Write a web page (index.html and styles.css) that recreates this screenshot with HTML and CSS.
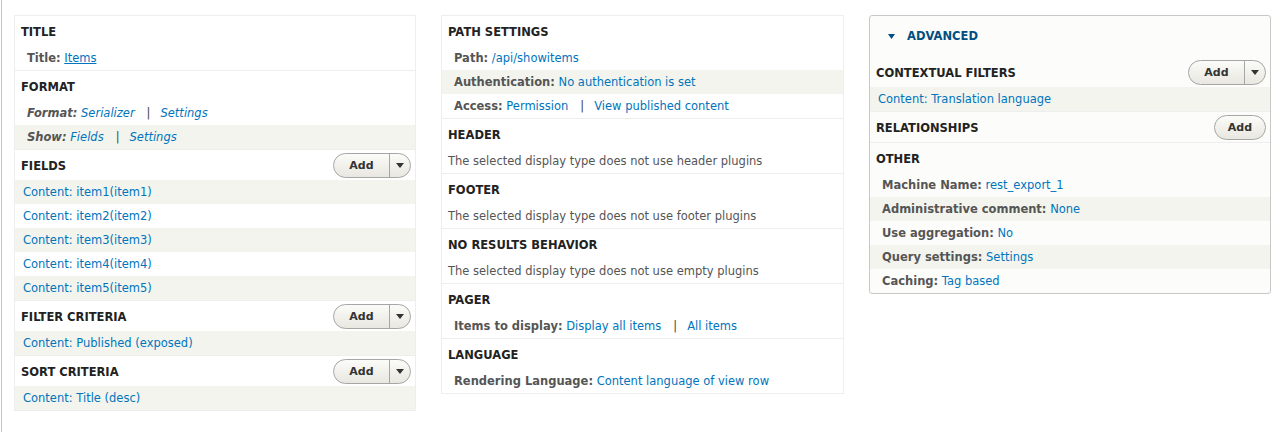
FILE: index.html
```html
<!DOCTYPE html>
<html lang="en">
<head>
<meta charset="utf-8">
<title>Views display settings</title>
<link rel="stylesheet" href="styles.css">
</head>
<body>
<div class="page">
  <div class="columns">

    <!-- First column -->
    <div class="column">
      <section class="bucket">
        <div class="bucket-head"><h3 class="bucket-title">Title</h3></div>
        <div class="row setting"><span class="label">Title:</span> <a href="#" class="underlined">Items</a></div>
      </section>
      <section class="bucket">
        <div class="bucket-head"><h3 class="bucket-title">Format</h3></div>
        <div class="row setting italic"><span class="label">Format:</span> <a href="#">Serializer</a><span class="sep">|</span><a href="#">Settings</a></div>
        <div class="row setting italic alt"><span class="label">Show:</span> <a href="#">Fields</a><span class="sep">|</span><a href="#">Settings</a></div>
      </section>
      <section class="bucket">
        <div class="bucket-head">
          <h3 class="bucket-title">Fields</h3>
          <div class="dropbutton"><span class="action">Add</span><span class="toggle"><svg width="8" height="5" viewBox="0 0 8 5"><path d="M0 0H8L4 5Z" fill="#333"/></svg></span></div>
        </div>
        <div class="row field alt"><a href="#">Content: item1(item1)</a></div>
        <div class="row field"><a href="#">Content: item2(item2)</a></div>
        <div class="row field alt"><a href="#">Content: item3(item3)</a></div>
        <div class="row field"><a href="#">Content: item4(item4)</a></div>
        <div class="row field alt"><a href="#">Content: item5(item5)</a></div>
      </section>
      <section class="bucket">
        <div class="bucket-head">
          <h3 class="bucket-title">Filter criteria</h3>
          <div class="dropbutton"><span class="action">Add</span><span class="toggle"><svg width="8" height="5" viewBox="0 0 8 5"><path d="M0 0H8L4 5Z" fill="#333"/></svg></span></div>
        </div>
        <div class="row field alt"><a href="#">Content: Published (exposed)</a></div>
      </section>
      <section class="bucket">
        <div class="bucket-head">
          <h3 class="bucket-title">Sort criteria</h3>
          <div class="dropbutton"><span class="action">Add</span><span class="toggle"><svg width="8" height="5" viewBox="0 0 8 5"><path d="M0 0H8L4 5Z" fill="#333"/></svg></span></div>
        </div>
        <div class="row field alt"><a href="#">Content: Title (desc)</a></div>
      </section>
    </div>

    <!-- Second column -->
    <div class="column">
      <section class="bucket">
        <div class="bucket-head"><h3 class="bucket-title">Path settings</h3></div>
        <div class="row setting"><span class="label">Path:</span> <a href="#">/api/showitems</a></div>
        <div class="row setting alt"><span class="label">Authentication:</span> <a href="#">No authentication is set</a></div>
        <div class="row setting"><span class="label">Access:</span> <a href="#">Permission</a><span class="sep">|</span><a href="#">View published content</a></div>
      </section>
      <section class="bucket">
        <div class="bucket-head"><h3 class="bucket-title">Header</h3></div>
        <div class="row note">The selected display type does not use header plugins</div>
      </section>
      <section class="bucket">
        <div class="bucket-head"><h3 class="bucket-title">Footer</h3></div>
        <div class="row note">The selected display type does not use footer plugins</div>
      </section>
      <section class="bucket">
        <div class="bucket-head"><h3 class="bucket-title">No results behavior</h3></div>
        <div class="row note">The selected display type does not use empty plugins</div>
      </section>
      <section class="bucket">
        <div class="bucket-head"><h3 class="bucket-title">Pager</h3></div>
        <div class="row setting"><span class="label">Items to display:</span> <a href="#">Display all items</a><span class="sep">|</span><a href="#">All items</a></div>
      </section>
      <section class="bucket">
        <div class="bucket-head"><h3 class="bucket-title">Language</h3></div>
        <div class="row setting"><span class="label">Rendering Language:</span> <a href="#">Content language of view row</a></div>
      </section>
    </div>

    <!-- Third column: advanced settings -->
    <div class="column advanced">
      <div class="legend">
        <svg class="legend-arrow" width="7" height="5" viewBox="0 0 7 5"><path d="M0 0H7L3.5 5Z" fill="#004f80"/></svg>
        <span class="legend-text">Advanced</span>
      </div>
      <section class="bucket">
        <div class="bucket-head">
          <h3 class="bucket-title">Contextual filters</h3>
          <div class="dropbutton"><span class="action">Add</span><span class="toggle"><svg width="8" height="5" viewBox="0 0 8 5"><path d="M0 0H8L4 5Z" fill="#333"/></svg></span></div>
        </div>
        <div class="row field alt"><a href="#">Content: Translation language</a></div>
      </section>
      <section class="bucket">
        <div class="bucket-head">
          <h3 class="bucket-title">Relationships</h3>
          <div class="button-add">Add</div>
        </div>
      </section>
      <section class="bucket">
        <div class="bucket-head"><h3 class="bucket-title">Other</h3></div>
        <div class="row setting"><span class="label">Machine Name:</span> <a href="#">rest_export_1</a></div>
        <div class="row setting alt"><span class="label">Administrative comment:</span> <a href="#">None</a></div>
        <div class="row setting"><span class="label">Use aggregation:</span> <a href="#">No</a></div>
        <div class="row setting alt"><span class="label">Query settings:</span> <a href="#">Settings</a></div>
        <div class="row setting"><span class="label">Caching:</span> <a href="#">Tag based</a></div>
      </section>
    </div>

  </div>
</div>
</body>
</html>
```

FILE: styles.css
```css
html, body {
  margin: 0;
  background: #fff;
}

body {
  font-family: "DejaVu Sans", "Lucida Grande", "Lucida Sans Unicode", sans-serif;
  font-size: 11.5px;
  color: #333;
}

.page {
  margin-left: 1px;
  border-left: 1px solid #c4c4c4;
  min-height: 432px;
  box-sizing: border-box;
  padding: 15px 0 0 12px;
}

.columns {
  display: grid;
  grid-template-columns: 402px 403px 402px;
  column-gap: 25px;
  align-items: start;
}

.column {
  border: 1px solid #eee;
  background: #fff;
}

.column.advanced {
  border-color: #c8c8c8;
  border-radius: 3px;
  background: #fcfcfa;
}

.bucket {
  border-bottom: 1px solid #eee;
}

.bucket:last-child {
  border-bottom: 0;
}

.bucket-head {
  display: flex;
  align-items: center;
  justify-content: space-between;
  height: 30px;
  box-sizing: border-box;
  padding: 1px 4px 0 6px;
}

.bucket-title {
  margin: 0;
  font-size: 11.5px;
  font-weight: bold;
  text-transform: uppercase;
  color: #222;
  line-height: 28px;
  padding-top: 1px;
}

.row {
  height: 24px;
  box-sizing: border-box;
  padding-top: 1px;
  line-height: 23px;
  white-space: nowrap;
}

.row.alt {
  background: #f3f4ee;
}

.setting {
  padding-left: 12px;
}

.field {
  padding-left: 8px;
}

.note {
  padding-left: 6px;
  color: #555;
}

.italic {
  font-style: italic;
}

.label {
  font-weight: bold;
  color: #555;
}

a {
  color: #0074bd;
  text-decoration: none;
}

a.underlined {
  text-decoration: underline;
}

.sep {
  margin: 0 10px 0 12px;
  color: #444;
  font-style: normal;
}

/* Split "Add" button with a toggle arrow */
.dropbutton {
  display: flex;
  height: 25px;
  box-sizing: border-box;
  border: 1px solid #a6a6a6;
  border-radius: 13px;
  background: linear-gradient(#fbfbf8, #e8e7e0);
  overflow: hidden;
}

.dropbutton .action {
  width: 55px;
  display: flex;
  align-items: center;
  justify-content: center;
  font-weight: bold;
  font-size: 11px;
  color: #333;
}

.dropbutton .toggle {
  width: 20px;
  border-left: 1px solid #a6a6a6;
  display: flex;
  align-items: center;
  justify-content: center;
}

.button-add {
  width: 52px;
  height: 25px;
  box-sizing: border-box;
  border: 1px solid #a6a6a6;
  border-radius: 13px;
  background: linear-gradient(#fbfbf8, #e8e7e0);
  display: flex;
  align-items: center;
  justify-content: center;
  font-weight: bold;
  font-size: 11px;
  color: #333;
}

/* Collapsible "Advanced" legend */
.legend {
  height: 41px;
  box-sizing: border-box;
  padding: 12px 0 0 18px;
  display: flex;
  align-items: flex-start;
}

.legend-arrow {
  margin-top: 6px;
  margin-right: 12px;
}

.legend-text {
  line-height: 16px;
  font-weight: bold;
  text-transform: uppercase;
  color: #004f80;
}
```
